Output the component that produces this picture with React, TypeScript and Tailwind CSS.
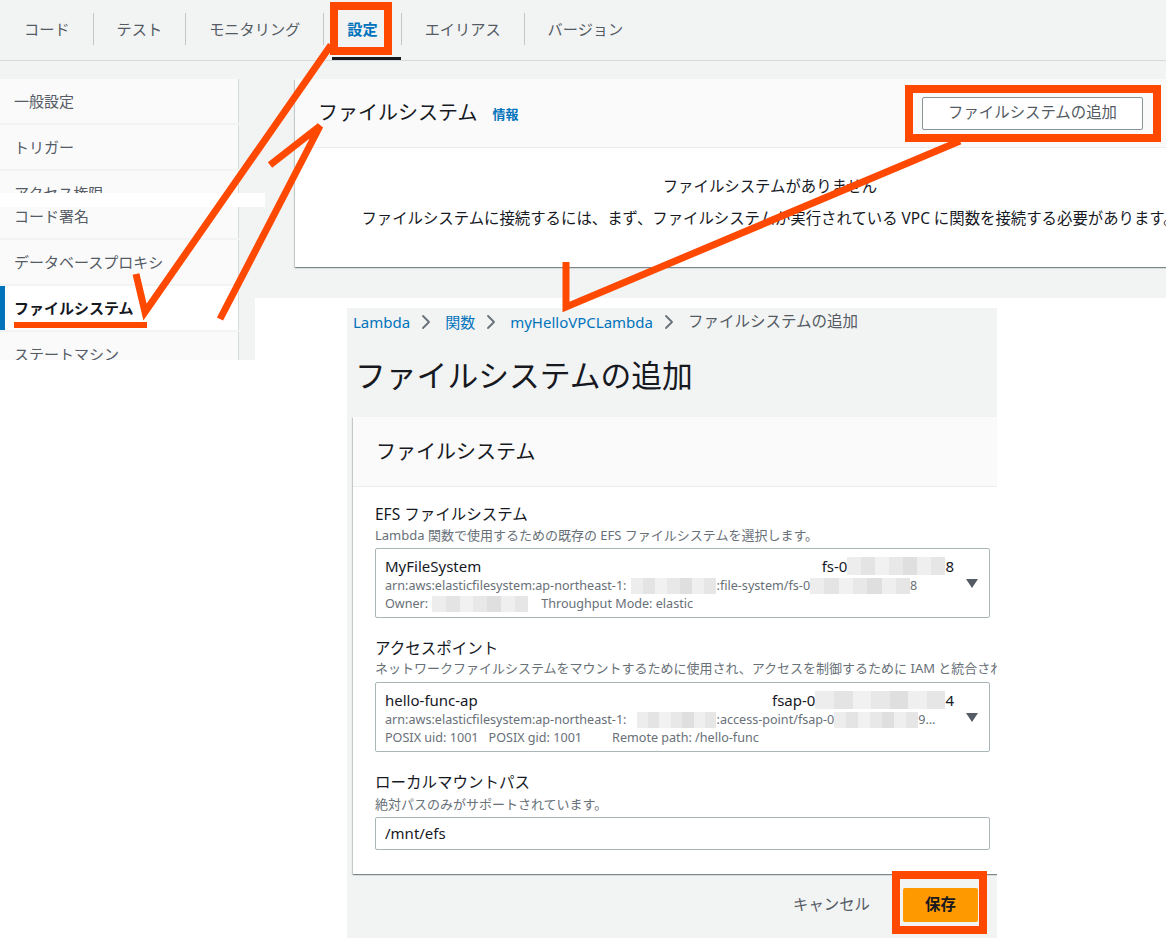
import { ChevronRight } from 'lucide-react';
import type { ReactNode } from 'react';

const tabs = ['コード', 'テスト', 'モニタリング', '設定', 'エイリアス', 'バージョン'];

const Redact = ({ w, h = 16 }: { w: number; h?: number }) => {
  const shades = ['#ededed', '#e4e4e4', '#f1f1f1', '#e8e8e8', '#dfdfdf', '#efefef', '#e6e6e6'];
  return (
    <span className="inline-flex overflow-hidden align-middle" style={{ width: w, height: h }}>
      {shades.map((c, i) => (
        <span key={i} className="flex-1 h-full" style={{ background: c }} />
      ))}
    </span>
  );
};

const TabBar = () => (
  <div className="h-[61px] bg-[#f2f3f3] border-b border-[#d5dbdb] flex items-center text-[15.2px] text-[#545b64]">
    {tabs.map((t, i) => (
      <div key={t} className="flex items-center h-full">
        {i > 0 && <div className="w-px h-[32px] bg-[#c2c8c9] mb-[2px]" />}
        <div className={`relative h-full flex items-center pb-[2px] ${i === 0 ? 'pl-[24px] pr-[23px]' : 'px-[23px]'}`}>
          <span className={i === 3 ? 'text-[#0073bb] font-bold' : ''}>{t}</span>
          {i === 3 && <div className="absolute left-[8px] right-0 bottom-0 h-[3px] bg-[#16191f]" />}
        </div>
      </div>
    ))}
  </div>
);

const SideItem = ({ label, active }: { label: string; active?: boolean }) => (
  <div className={`relative h-[44px] flex items-center pl-[14px] border-r border-[#d5dbdb] ${active ? 'bg-white font-bold text-[#16191f]' : 'bg-[#fafafa] text-[#545b64]'}`}>
    {active && <div className="absolute left-0 top-0 bottom-0 w-[5px] bg-[#0073bb]" />}
    <span className="leading-[20px]">{label}</span>
  </div>
);

const Sidebar = () => (
  <div className="w-[255px] h-[299px] shrink-0 bg-[#f2f3f3] pt-[18px] text-[15px]">
    <div className="w-[239px] flex flex-col gap-[2px]">
      <SideItem label="一般設定" />
      <SideItem label="トリガー" />
      <div className="h-[22px] overflow-hidden bg-[#fafafa] border-r border-[#d5dbdb] pl-[14px] pt-[12px] text-[#545b64] leading-[20px]">
        アクセス権限
      </div>
    </div>
    <div className="relative z-10 w-[265px] h-[14px] bg-white" />
    <div className="w-[239px] flex flex-col gap-[2px]">
      <div className="h-[31px] overflow-hidden bg-[#fafafa] border-r border-[#d5dbdb] pl-[14px] text-[#545b64]">
        <div className="leading-[20px] -mt-[1px]">コード署名</div>
      </div>
      <SideItem label="データベースプロキシ" />
      <SideItem label="ファイルシステム" active />
      <div className="h-[28px] overflow-hidden bg-[#fafafa] border-r border-[#d5dbdb] pl-[14px] pt-[12px] text-[#545b64] leading-[20px]">
        ステートマシン
      </div>
    </div>
  </div>
);

const cardShadow =
  'shadow-[0_1px_1px_0_rgba(0,28,36,0.3),1px_1px_1px_0_rgba(0,28,36,0.15),-1px_1px_1px_0_rgba(0,28,36,0.15)]';

const FileSystemCard = () => (
  <div className={`w-[950px] h-[188px] bg-white ${cardShadow}`}>
    <div className="h-[69px] bg-[#fafafa] border-b border-[#eaeded] flex items-center pl-[23px] pr-[102px]">
      <span className="text-[20px] leading-[26px]">ファイルシステム</span>
      <span className="ml-[15px] text-[13px] font-bold text-[#0073bb] mt-[3px]">情報</span>
      <button className="ml-auto w-[221px] h-[33px] border border-[#879596] rounded-[2px] bg-white text-[15.4px] text-[#545b64]">
        ファイルシステムの追加
      </button>
    </div>
    <div className="pt-[28px] text-center text-[15.4px]">
      <div className="leading-[22px] font-normal">ファイルシステムがありません</div>
      <div className="mt-[10px] leading-[22px] whitespace-nowrap">
        ファイルシステムに接続するには、まず、ファイルシステムが実行されている VPC に関数を接続する必要があります。
      </div>
    </div>
  </div>
);

const SelectBox = ({ children }: { children: ReactNode }) => (
  <div className="flex w-[615px] border border-[#aab7b8] rounded-[2px] bg-white">
    <div className="flex-1 min-w-0 pl-[9px] pt-[7px] pb-[5px]">{children}</div>
    <div className="w-[35px] flex items-center justify-center">
      <svg width="12" height="9" viewBox="0 0 12 9">
        <polygon points="0,0 12,0 6,9" fill="#545b64" />
      </svg>
    </div>
  </div>
);

const Line2 = ({ children }: { children: ReactNode }) => (
  <div className="mt-[2px] h-[16px] flex items-center whitespace-nowrap overflow-hidden text-[12.6px] leading-[16px] text-[#687078]">
    {children}
  </div>
);

const Crumb = () => <ChevronRight size={24} strokeWidth={1.8} className="text-[#687078] ml-[4px] mr-[7px] shrink-0" />;

const AddFileSystemPage = () => (
  <div className="w-[650px] h-[630px] bg-[#f2f3f3] pl-[6px] pt-[4px] overflow-hidden">
    <div className="flex items-center h-[20px] text-[15px] whitespace-nowrap">
      <span className="text-[#0073bb]">Lambda</span>
      <Crumb />
      <span className="text-[#0073bb]">関数</span>
      <Crumb />
      <span className="text-[#0073bb]">myHelloVPCLambda</span>
      <Crumb />
      <span className="text-[#545b64] text-[15.5px]">ファイルシステムの追加</span>
    </div>
    <h1 className="mt-[23px] pl-[2px] text-[30.8px] leading-[40px] font-normal">ファイルシステムの追加</h1>

    <div className={`mt-[22px] w-[660px] bg-white ${cardShadow}`}>
      <div className="h-[70px] bg-[#fafafa] border-b border-[#eaeded] flex items-center pl-[23px] text-[20px]">
        ファイルシステム
      </div>
      <div className="pl-[22px] pt-[17px] pb-[24px]">
        <div className="text-[15.5px] leading-[20px]">EFS ファイルシステム</div>
        <div className="mt-[2px] text-[13px] leading-[18px] text-[#687078]">
          Lambda 関数で使用するための既存の EFS ファイルシステムを選択します。
        </div>
        <div className="mt-[4px]">
          <SelectBox>
            <div className="flex justify-between items-center h-[20px] text-[15px] leading-[20px]">
              <span>MyFileSystem</span>
              <span className="flex items-center">
                fs-0<Redact w={98} h={18} />8
              </span>
            </div>
            <Line2>
              arn:aws:elasticfilesystem:ap-northeast-1:
              <span className="ml-[4px] flex"><Redact w={86} /></span>
              :file-system/fs-0
              <span className="flex"><Redact w={100} /></span>8
            </Line2>
            <Line2>
              Owner:
              <span className="ml-[4px] flex"><Redact w={96} /></span>
              <span className="ml-[13px]">Throughput Mode: elastic</span>
            </Line2>
          </SelectBox>
        </div>

        <div className="mt-[20px] text-[15.5px] leading-[20px]">アクセスポイント</div>
        <div className="mt-[1px] text-[13px] leading-[18px] text-[#687078] whitespace-nowrap overflow-hidden">
          ネットワークファイルシステムをマウントするために使用され、アクセスを制御するために IAM と統合されます。
        </div>
        <div className="mt-[5px]">
          <SelectBox>
            <div className="flex justify-between items-center h-[20px] text-[15px] leading-[20px]">
              <span>hello-func-ap</span>
              <span className="flex items-center">
                fsap-0<Redact w={130} h={18} />4
              </span>
            </div>
            <Line2>
              arn:aws:elasticfilesystem:ap-northeast-1:
              <span className="ml-[10px] flex"><Redact w={80} /></span>
              :access-point/fsap-0
              <span className="flex"><Redact w={84} /></span>9…
            </Line2>
            <Line2>
              POSIX uid: 1001
              <span className="ml-[10px]">POSIX gid: 1001</span>
              <span className="ml-[30px]">Remote path: /hello-func</span>
            </Line2>
          </SelectBox>
        </div>

        <div className="mt-[20px] text-[15.5px] leading-[20px]">ローカルマウントパス</div>
        <div className="mt-[3px] text-[13px] leading-[18px] text-[#687078]">絶対パスのみがサポートされています。</div>
        <div className="mt-[4px] w-[615px] h-[33px] border border-[#aab7b8] rounded-[2px] bg-white flex items-center pl-[9px] text-[15px]">
          /mnt/efs
        </div>
      </div>
    </div>

    <div className="mt-[14px] pr-[19px] flex justify-end items-center gap-[33px] text-[15.4px]">
      <span className="text-[#545b64]">キャンセル</span>
      <button className="w-[75px] h-[34px] bg-[#ff9900] rounded-[2px] font-bold text-[#16191f]">保存</button>
    </div>
  </div>
);

const ORANGE = '#ff4800';

const Annotations = () => (
  <>
    <svg className="absolute left-0 top-0 pointer-events-none z-20" width="1166" height="938">
      <g stroke={ORANGE} strokeWidth="7" fill="none" strokeLinejoin="miter" strokeMiterlimit="3">
        <polyline points="136,274 145,312 331,45" />
        <polyline points="220,319 320,126 270,165" />
        <polyline points="960,141 566,307 566,262" />
      </g>
    </svg>
    <div className="absolute z-20 left-[14px] top-[322px] w-[133px] h-[6px] bg-[#ff4800]" />
    <div className="absolute z-20 left-[330px] top-[2px] w-[62px] h-[53px] border-[8px] border-[#ff4800]" />
    <div className="absolute z-20 left-[905px] top-[85px] w-[256px] h-[57px] border-[8px] border-[#ff4800]" />
    <div className="absolute z-20 left-[892px] top-[871px] w-[95px] h-[63px] border-[8px] border-[#ff4800]" />
  </>
);

export default function App() {
  return (
    <div className="relative w-[1166px] h-[938px] overflow-hidden bg-white font-['Noto_Sans','Noto_Sans_CJK_JP',sans-serif] text-[#16191f]">
      <TabBar />
      <div className="flex items-start">
        <Sidebar />
        <div className="flex-1 min-w-0 overflow-hidden">
          <div className="h-[237px] bg-[#f2f3f3] pl-[40px] pt-[18px]">
            <FileSystemCard />
          </div>
          <div className="ml-[92px] mt-[10px]">
            <AddFileSystemPage />
          </div>
        </div>
      </div>
      <Annotations />
    </div>
  );
}
